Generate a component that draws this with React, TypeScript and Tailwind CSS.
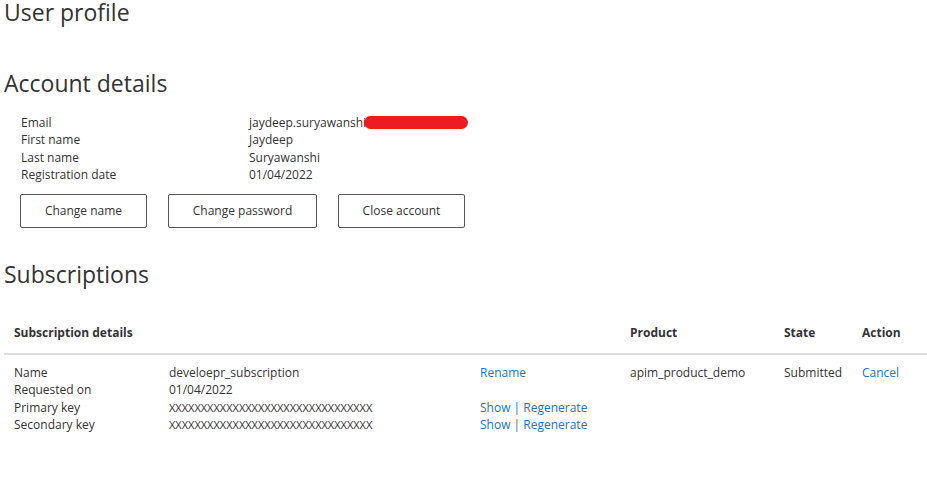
import React from 'react';

const font = { fontFamily: '"Open Sans", "Noto Sans", sans-serif' };

const account = [
  ['Email', 'jaydeep.suryawanshi'],
  ['First name', 'Jaydeep'],
  ['Last name', 'Suryawanshi'],
  ['Registration date', '01/04/2022'],
];

const keyMask = 'XXXXXXXXXXXXXXXXXXXXXXXXXXXXXXXX';

const subscription = [
  ['Name', 'develoepr_subscription'],
  ['Requested on', '01/04/2022'],
  ['Primary key', keyMask],
  ['Secondary key', keyMask],
];

function KeyLinks() {
  return (
    <span className="text-[#1a73c8]">
      <a>Show</a> | <a>Regenerate</a>
    </span>
  );
}

export default function App() {
  return (
    <div className="min-h-screen bg-white text-[#333] overflow-hidden" style={font}>
      <h1 className="text-[23px] leading-[24px] font-normal pl-1">User profile</h1>

      <h2 className="text-[23px] leading-[24px] font-normal pl-1 mt-[47px]">Account details</h2>

      <div className="mt-[19px] text-[12px]">
        <div className="pl-[21px]">
          {account.map(([label, value]) => (
            <div key={label} className="flex h-[17.5px] items-center">
              <span className="w-[228px]">{label}</span>
              <span className="flex items-center">
                {value}
                {label === 'Email' && (
                  <span className="inline-block w-[104px] h-[13px] bg-[#ed1c24] rounded-full -ml-[2px]" />
                )}
              </span>
            </div>
          ))}
        </div>

        <div className="flex gap-[21px] mt-[10px] pl-[20px]">
          <button className="w-[127px] h-[34px] border border-[#555] rounded-[2px] text-[12px]">
            Change name
          </button>
          <button className="w-[149px] h-[34px] border border-[#555] rounded-[2px] text-[12px]">
            Change password
          </button>
          <button className="w-[127px] h-[34px] border border-[#555] rounded-[2px] text-[12px]">
            Close account
          </button>
        </div>
      </div>

      <h2 className="text-[23px] leading-[24px] font-normal pl-1 mt-[34px]">Subscriptions</h2>

      <div className="ml-1 mt-[27px] text-[12px]">
        <div className="flex items-center h-[42px] border-b-2 border-[#dcdde0] font-bold">
          <div className="w-[626px] pl-[10px]">Subscription details</div>
          <div className="w-[154px]">Product</div>
          <div className="w-[78px]">State</div>
          <div>Action</div>
        </div>

        <div className="flex pt-[9px]">
          <div className="w-[476px] pl-[10px]">
            {subscription.map(([label, value], i) => (
              <div key={label} className="flex h-[17.5px] items-center">
                <span className="w-[155px]">{label}</span>
                <span className={i > 1 ? 'text-[11px]' : ''}>{value}</span>
              </div>
            ))}
          </div>
          <div className="w-[150px]">
            <div className="h-[17.5px] flex items-center">
              <a className="text-[#1a73c8]">Rename</a>
            </div>
            <div className="h-[17.5px]" />
            <div className="h-[17.5px] flex items-center"><KeyLinks /></div>
            <div className="h-[17.5px] flex items-center"><KeyLinks /></div>
          </div>
          <div className="w-[154px] h-[17.5px] flex items-center">apim_product_demo</div>
          <div className="w-[78px] h-[17.5px] flex items-center">Submitted</div>
          <div className="h-[17.5px] flex items-center">
            <a className="text-[#1a73c8]">Cancel</a>
          </div>
        </div>
      </div>
    </div>
  );
}
